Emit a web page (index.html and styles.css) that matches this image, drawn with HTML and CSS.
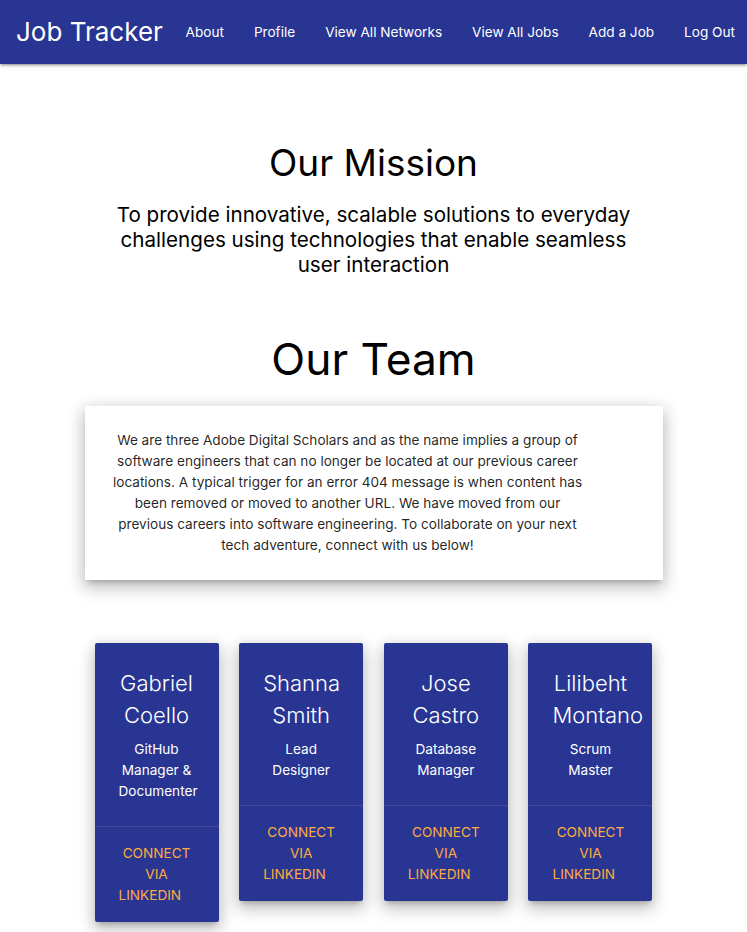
FILE: index.html
```html
<!DOCTYPE html>
<html lang="en">
<head>
<meta charset="utf-8">
<title>Job Tracker - About</title>
<link rel="stylesheet" href="styles.css">
</head>
<body>
<nav class="navbar">
  <a class="brand" href="#">Job Tracker</a>
  <ul class="nav-links">
    <li><a href="#">About</a></li>
    <li><a href="#">Profile</a></li>
    <li><a href="#">View All Networks</a></li>
    <li><a href="#">View All Jobs</a></li>
    <li><a href="#">Add a Job</a></li>
    <li><a href="#">Log Out</a></li>
  </ul>
</nav>
<main class="page">
  <section class="mission">
    <h3 class="mission-title">Our Mission</h3>
    <h5 class="mission-text">To provide innovative, scalable solutions to everyday challenges using technologies that enable seamless user interaction</h5>
  </section>
  <section class="team">
    <h2 class="team-title">Our Team</h2>
    <div class="intro-card">
      <p class="intro-text">We are three Adobe Digital Scholars and as the name implies a group of software engineers that can no longer be located at our previous career locations. A typical trigger for an error 404 message is when content has been removed or moved to another URL. We have moved from our previous careers into software engineering. To collaborate on your next tech adventure, connect with us below!</p>
    </div>
    <div class="members">
      <div class="member">
        <div class="member-content">
          <span class="member-name">Gabriel Coello</span>
          <p class="member-role">GitHub Manager &amp; Documenter</p>
        </div>
        <div class="member-action"><a href="#">Connect via LinkedIn</a></div>
      </div>
      <div class="member">
        <div class="member-content">
          <span class="member-name">Shanna Smith</span>
          <p class="member-role">Lead Designer</p>
        </div>
        <div class="member-action"><a href="#">Connect via LinkedIn</a></div>
      </div>
      <div class="member">
        <div class="member-content">
          <span class="member-name">Jose Castro</span>
          <p class="member-role">Database Manager</p>
        </div>
        <div class="member-action"><a href="#">Connect via LinkedIn</a></div>
      </div>
      <div class="member">
        <div class="member-content">
          <span class="member-name">Lilibeht Montano</span>
          <p class="member-role">Scrum Master</p>
        </div>
        <div class="member-action"><a href="#">Connect via LinkedIn</a></div>
      </div>
    </div>
  </section>
</main>
</body>
</html>
```
FILE: styles.css
```css
* { box-sizing: border-box; }
html { font-size: 14px; }
body {
  margin: 0;
  font-family: Inter, "Noto Sans", "Liberation Sans", sans-serif;
  color: rgba(0, 0, 0, 0.87);
  background: #fff;
  line-height: 1.5;
}
a { text-decoration: none; }

.navbar {
  height: 64px;
  background: #283593;
  display: flex;
  align-items: center;
  padding-left: 16px;
  box-shadow: 0 2px 2px 0 rgba(0,0,0,0.14), 0 3px 1px -2px rgba(0,0,0,0.12), 0 1px 5px 0 rgba(0,0,0,0.2);
  position: relative;
  z-index: 2;
  white-space: nowrap;
}
.brand {
  color: #fff;
  font-size: 26px;
  line-height: 62px;
  flex-shrink: 0;
}
.nav-links {
  list-style: none;
  margin: 0 -3px 0 auto;
  padding: 0;
  display: flex;
  flex-shrink: 0;
}
.nav-links a {
  display: block;
  color: #fff;
  font-size: 13.6px;
  line-height: 62px;
  padding: 0 15px;
}

.page { padding-top: 49px; text-align: center; }

.mission-title {
  font-size: 37px;
  font-weight: 400;
  line-height: 45px;
  margin: 27px 0 17px;
  color: #000;
}
.mission-text {
  font-size: 20.6px;
  font-weight: 400;
  line-height: 25px;
  width: 540px;
  margin: 0 auto;
  color: #000;
}
.team-title {
  font-size: 44.3px;
  font-weight: 400;
  line-height: 55px;
  margin: 55px 0 19px;
  color: #000;
}
.intro-card {
  width: 578px;
  margin: 0 auto;
  padding: 24px 76px 24px 24px;
  background: #fff;
  box-shadow: 0 8px 17px 2px rgba(0,0,0,0.14), 0 3px 14px 2px rgba(0,0,0,0.12), 0 5px 5px -3px rgba(0,0,0,0.2);
}
.intro-text {
  margin: 0;
  font-size: 13.6px;
  line-height: 21px;
  text-align: center;
}
.members {
  display: grid;
  grid-template-columns: repeat(4, 124px);
  column-gap: 20.67px;
  justify-content: center;
  align-items: start;
  margin-top: 63px;
  padding-bottom: 40px;
}
.member {
  background: #283593;
  border-radius: 2px;
  color: #fff;
  box-shadow: 0 8px 17px 2px rgba(0,0,0,0.14), 0 3px 14px 2px rgba(0,0,0,0.12), 0 5px 5px -3px rgba(0,0,0,0.2);
}
.member-content { padding: 24px; }
.member-name {
  display: block;
  font-size: 22px;
  font-weight: 300;
  line-height: 32px;
  margin-bottom: 8px;
}
.member-role {
  margin: 0;
  font-size: 13.6px;
  line-height: 21px;
}
.member-action {
  border-top: 1px solid rgba(160,160,160,0.2);
  padding: 16px 24px;
  font-size: 13.6px;
  line-height: 21px;
}
.member-action a {
  color: #ffab40;
  text-transform: uppercase;
  margin-right: 24px;
}
```
